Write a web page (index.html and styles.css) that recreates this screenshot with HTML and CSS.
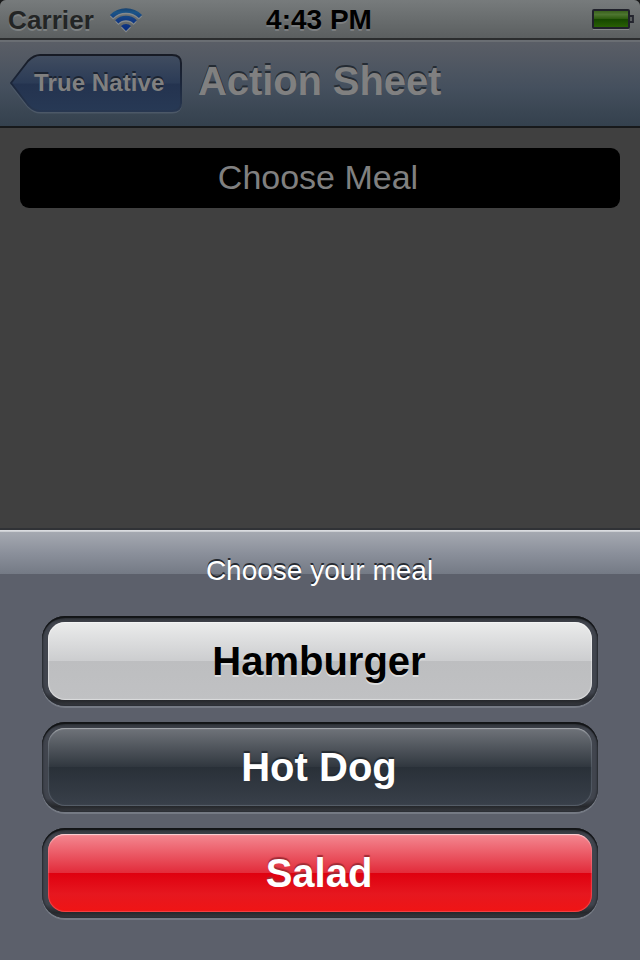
FILE: index.html
```html
<!DOCTYPE html>
<html lang="en">
<head>
<meta charset="utf-8">
<title>Action Sheet</title>
<link rel="stylesheet" href="styles.css">
</head>
<body>
<div class="screen">
  <header class="status">
    <div class="network">
      <span class="carrier">Carrier</span>
      <svg class="wifi" width="34" height="28" viewBox="0 0 34 28">
        <defs>
          <linearGradient id="wifi" x1="0" y1="0" x2="0" y2="26" gradientUnits="userSpaceOnUse">
            <stop offset="0" stop-color="#163a66"/><stop offset=".2" stop-color="#1c5587"/><stop offset=".5" stop-color="#123b83"/><stop offset="1" stop-color="#062a80"/>
          </linearGradient>
        </defs>
        <g transform="translate(0 1.5)" fill="none" stroke="#858a8c" stroke-width="4.500">
          <path d="M2.500 9.500A20.500 20.500 0 0 1 31.500 9.500M7.800 14.800A13 13 0 0 1 26.200 14.800"/>
          <path fill="#858a8c" stroke="none" d="M12 19A7 7 0 0 1 22 19L17 24Z"/>
        </g>
        <g fill="none" stroke="url(#wifi)" stroke-width="4.500">
          <path d="M2.500 9.500A20.500 20.500 0 0 1 31.500 9.500M7.800 14.800A13 13 0 0 1 26.200 14.800"/>
          <path fill="url(#wifi)" stroke="none" d="M12 19A7 7 0 0 1 22 19L17 24Z"/>
        </g>
      </svg>
    </div>
    <span class="clock">4:43 PM</span>
    <svg class="battery" width="44" height="24" viewBox="0 0 44 24">
      <defs>
        <linearGradient id="charge" x1="0" y1="0" x2="0" y2="1">
          <stop offset="0" stop-color="#345b17"/><stop offset=".25" stop-color="#4d7530"/><stop offset=".5" stop-color="#2c5a0e"/><stop offset=".52" stop-color="#164700"/><stop offset="1" stop-color="#2b6305"/>
        </linearGradient>
      </defs>
      <path d="M3 21.500H39" stroke="#858788"/>
      <rect x="3" y="2" width="36" height="18" rx="1" fill="url(#charge)" stroke="#20212b" stroke-width="2"/>
      <path d="M40 8H43V14H40" fill="#595c5e" stroke="#24252e" stroke-width="1.800"/>
    </svg>
  </header>
  <nav class="navbar">
    <a class="back">
      <svg class="back-shape" width="174" height="62" viewBox="0 0 174 62">
        <defs>
          <linearGradient id="back" x1="0" y1="0" x2="0" y2="1">
            <stop offset="0" stop-color="#414d60"/><stop offset=".5" stop-color="#2b3b56"/><stop offset=".52" stop-color="#24334f"/><stop offset="1" stop-color="#273955"/>
          </linearGradient>
          <linearGradient id="edge" x1="0" y1="0" x2="0" y2="1">
            <stop offset="0" stop-color="#171b25"/><stop offset=".5" stop-color="#1b263a"/><stop offset="1" stop-color="#283750"/>
          </linearGradient>
        </defs>
        <path d="M2 31L19 52.500Q25 58.500 31 58.500H163Q172 58.500 172 50" fill="none" stroke="#4c5867" stroke-width="2"/>
        <path d="M2 29L19 7Q25 1 31 1H163Q172 1 172 9V49Q172 57 163 57H31Q25 57 19 51Z" fill="url(#back)" stroke="url(#edge)" stroke-width="2" stroke-linejoin="round"/>
      </svg>
      <span class="back-label">True Native</span>
    </a>
    <h1 class="title">Action Sheet</h1>
  </nav>
  <main class="content">
    <div class="choose">Choose Meal</div>
  </main>
  <section class="sheet">
    <h2 class="prompt">Choose your meal</h2>
    <div class="well"><div class="button light">Hamburger</div></div>
    <div class="well"><div class="button dark">Hot Dog</div></div>
    <div class="well"><div class="button red">Salad</div></div>
  </section>
</div>
</body>
</html>
```
FILE: styles.css
```css
* { box-sizing: border-box; }
body {
  margin: 0;
  background: #000;
  font-family: "Liberation Sans", Arial, sans-serif;
}
.screen {
  width: 640px;
  height: 960px;
  display: flex;
  flex-direction: column;
  background: #404040;
  overflow: hidden;
}
.status {
  height: 40px;
  flex: none;
  display: grid;
  grid-template-columns: 1fr auto 1fr;
  align-items: start;
  background: linear-gradient(#777b7c, #5b5f60 38px);
  border-bottom: 2px solid #2b2d2e;
  border-radius: 6px 6px 0 0;
  box-shadow: 0 -10px 0 #1a1b1b;
  font-weight: bold;
  line-height: 40px;
}
.network { display: flex; }
.carrier {
  width: 109px;
  padding-left: 8px;
  font-size: 26px;
  letter-spacing: 0.1px;
  color: #232525;
  text-shadow: 0 2px 0 #7d8182;
}
.wifi { margin-top: 7px; }
.clock {
  margin-right: 2px;
  font-size: 28px;
  line-height: 39px;
  color: #000;
  text-shadow: 0 2px 0 #7b7e80;
}
.battery { justify-self: end; margin: 8px 6px 0 0; }
.navbar {
  height: 88px;
  flex: none;
  display: flex;
  padding: 12px 0 0 9px;
  background: linear-gradient(#5a5e66, #45505e 45px, #3a4653 70px, #34414e 84px);
  border-top: 2px solid #6a6e73;
  border-bottom: 2px solid #17191b;
}
.back {
  position: relative;
  width: 174px;
  height: 62px;
  padding-left: 25px;
}
.back-shape { position: absolute; left: 0; top: 0; }
.back-label {
  position: relative;
  display: block;
  font-size: 24px;
  font-weight: bold;
  line-height: 58px;
  letter-spacing: 0.1px;
  color: #808080;
  text-shadow: 0 -2px 0 #1b2330;
  white-space: nowrap;
}
.title {
  margin: 0 0 0 15px;
  font-size: 40px;
  line-height: 54px;
  letter-spacing: -0.1px;
  color: #808080;
  text-shadow: 0 -2px 0 #252c34;
  white-space: nowrap;
}
.content {
  flex: 1;
  padding: 20px;
}
.choose {
  height: 60px;
  border-radius: 9px;
  background: #000;
  color: #808080;
  font-size: 34px;
  line-height: 59px;
  text-align: center;
  padding-right: 4px;
}
.sheet {
  height: 432px;
  flex: none;
  display: flex;
  flex-direction: column;
  align-items: center;
  gap: 16px;
  border-top: 2px solid #303236;
  background:
    linear-gradient(#e0e2e5, #c5c8cd) 0 0 / 100% 2px no-repeat,
    linear-gradient(#a5a9b1, #8b909b 50%, #747a85) 0 2px / 100% 42px no-repeat,
    #5c606b;
}
.prompt {
  margin: 0;
  height: 70px;
  padding: 21px 1px 0 0;
  font-size: 28px;
  font-weight: normal;
  line-height: 40px;
  color: #fff;
  text-shadow: 0 -2px 0 #252930;
}
.well {
  width: 556px;
  height: 90px;
  flex: none;
  padding: 6px;
  border-radius: 23px;
  background: linear-gradient(#2a2d31, #41454e 8%, #41454e 85%, #26282c 94%, #3a3d43);
  box-shadow: 0 2px 0 #757a84, inset 0 2px 1px #121416, inset 0 0 2px 1px #292c32;
}
.button {
  height: 78px;
  padding-right: 2px;
  border-radius: 17px;
  font-size: 40px;
  font-weight: bold;
  line-height: 78px;
  text-align: center;
}
.light {
  color: #000;
  background: linear-gradient(#ebecec, #cccdcf 39px, #bdbec0 39px, #c0c1c3);
  box-shadow: inset 0 0 1px 1px rgba(255, 255, 255, 0.45);
  text-shadow: 0 2px 0 #dcddde;
}
.dark {
  color: #fff;
  background: linear-gradient(#70747a, #30373f 39px, #293038 39px, #39404a);
  box-shadow: inset 0 2px 1px -1px #a4a7ab, inset 0 0 1px 1px rgba(150, 157, 168, 0.35);
  text-shadow: 0 -2px 1px #242a31;
}
.red {
  color: #fff;
  background: linear-gradient(#f48992, #e22b3a 39px, #df000f 39px, #e6171f 60px, #f01414);
  box-shadow: inset 0 2px 1px -1px #fbd2d5, inset 0 0 1px 1px rgba(255, 160, 165, 0.35);
  text-shadow: 0 -2px 1px #a12b35;
}
```
